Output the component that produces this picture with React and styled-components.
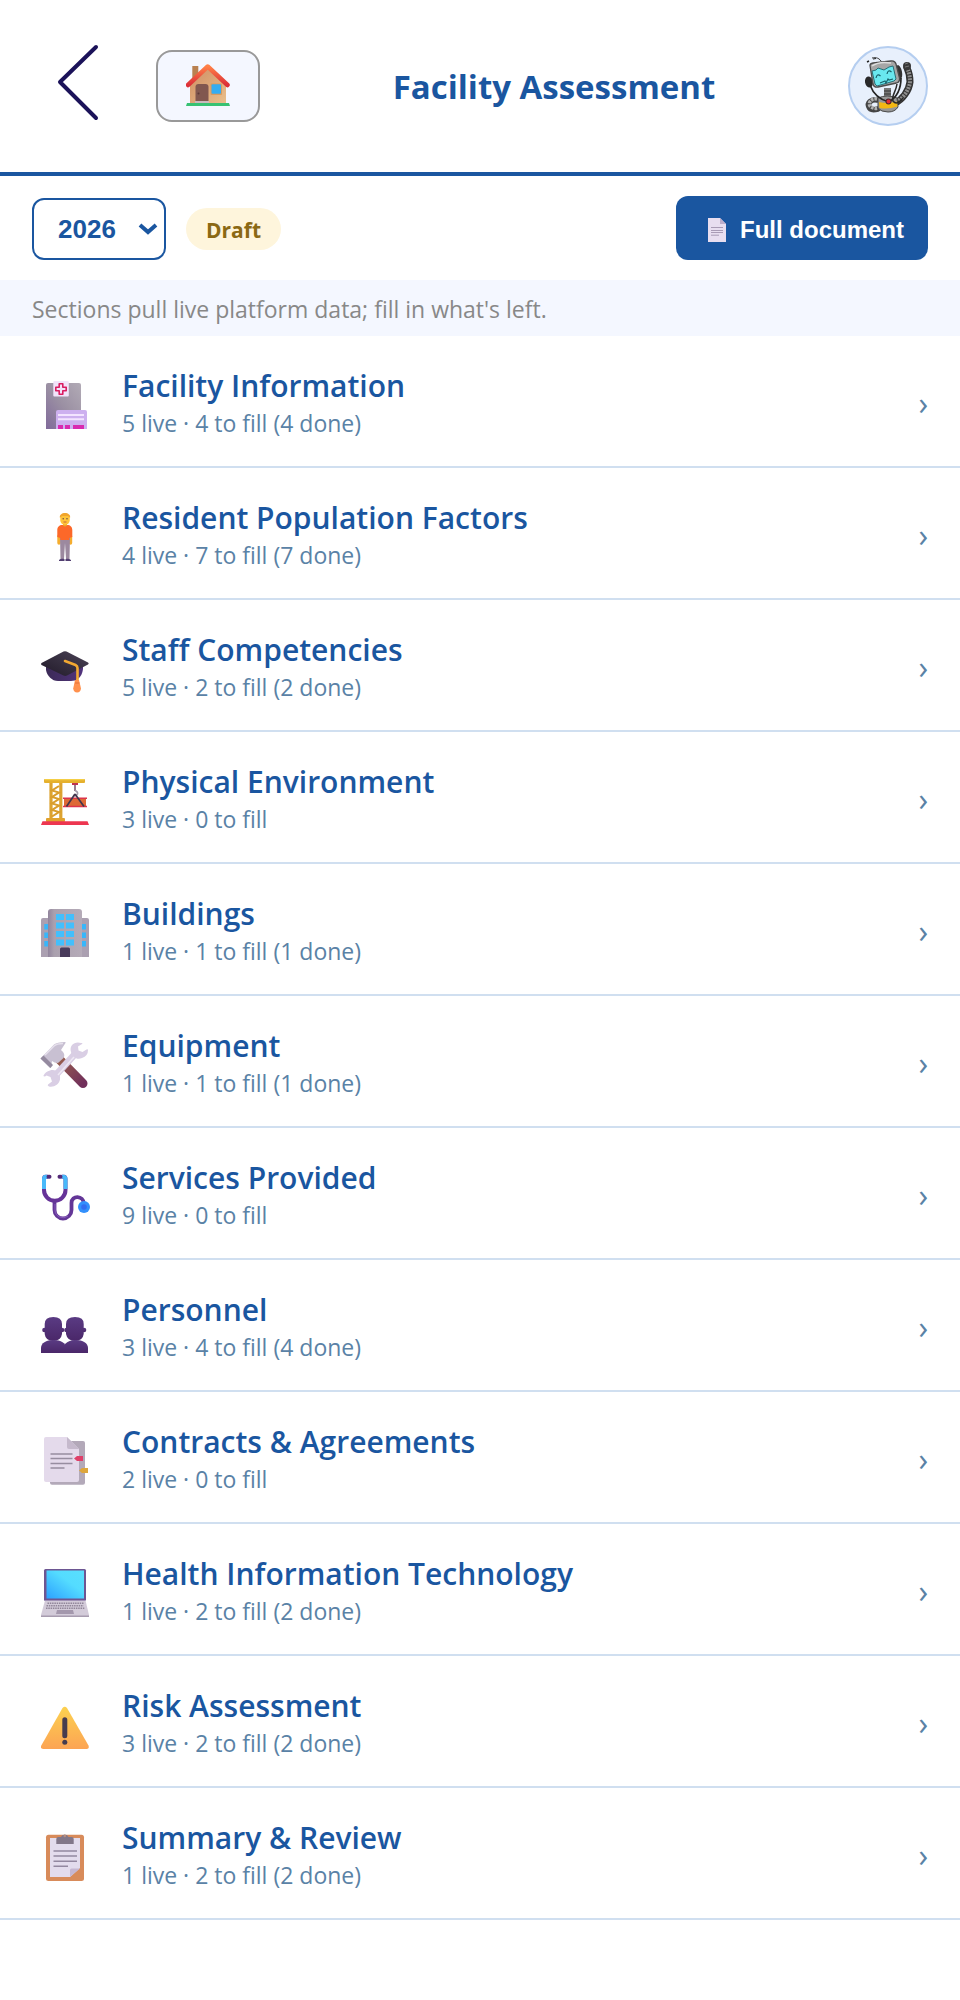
import React, { useState } from "react";
import styled, { createGlobalStyle } from "styled-components";

const sections = [
  { id: "facility", title: "Facility Information", live: 5, fill: 4, done: 4, Icon: HospitalIcon },
  { id: "residents", title: "Resident Population Factors", live: 4, fill: 7, done: 7, Icon: PersonIcon },
  { id: "staff", title: "Staff Competencies", live: 5, fill: 2, done: 2, Icon: CapIcon },
  { id: "physical", title: "Physical Environment", live: 3, fill: 0, done: 0, Icon: CraneIcon },
  { id: "buildings", title: "Buildings", live: 1, fill: 1, done: 1, Icon: BuildingIcon },
  { id: "equipment", title: "Equipment", live: 1, fill: 1, done: 1, Icon: ToolsIcon },
  { id: "services", title: "Services Provided", live: 9, fill: 0, done: 0, Icon: StethoscopeIcon },
  { id: "personnel", title: "Personnel", live: 3, fill: 4, done: 4, Icon: PeopleIcon },
  { id: "contracts", title: "Contracts & Agreements", live: 2, fill: 0, done: 0, Icon: ContractIcon },
  { id: "hit", title: "Health Information Technology", live: 1, fill: 2, done: 2, Icon: LaptopIcon },
  { id: "risk", title: "Risk Assessment", live: 3, fill: 2, done: 2, Icon: WarningIcon },
  { id: "summary", title: "Summary & Review", live: 1, fill: 2, done: 2, Icon: ClipboardIcon },
];

const describe = ({ live, fill, done }) =>
  `${live} live · ${fill} to fill${fill > 0 ? ` (${done} done)` : ""}`;

export default function App() {
  const [year, setYear] = useState("2026");

  return (
    <>
      <GlobalStyle />
      <Header>
        <BackButton type="button" aria-label="Back">
          <BackIcon />
        </BackButton>
        <HomeButton type="button" aria-label="Home">
          <HouseIcon />
        </HomeButton>
        <PageTitle>Facility Assessment</PageTitle>
        <AssistantButton type="button" aria-label="Assistant">
          <RobotIcon />
        </AssistantButton>
      </Header>

      <main>
        <Toolbar>
          <YearField>
            <YearSelect aria-label="Assessment year" value={year} onChange={(e) => setYear(e.target.value)}>
              <option value="2026">2026</option>
              <option value="2025">2025</option>
            </YearSelect>
            <svg width="20" height="14" viewBox="0 0 20 14" fill="none" aria-hidden="true">
              <path d="m2 3 8 7 8-7" stroke="#1a56a0" strokeWidth="4" />
            </svg>
          </YearField>
          <Status>Draft</Status>
          <DocumentButton type="button">
            <PageIcon />
            Full document
          </DocumentButton>
        </Toolbar>
        <Hint>Sections pull live platform data; fill in what's left.</Hint>

        <SectionList>
          {sections.map((section) => (
            <li key={section.id}>
              <SectionRow type="button">
                <IconSlot>
                  <section.Icon />
                </IconSlot>
                <SectionText>
                  <SectionTitle>{section.title}</SectionTitle>
                  <SectionMeta>{describe(section)}</SectionMeta>
                </SectionText>
                <Chevron aria-hidden="true">›</Chevron>
              </SectionRow>
            </li>
          ))}
        </SectionList>
      </main>
    </>
  );
}

// --- Icons ---
function Emoji({ children }) {
  return (
    <svg width="48" height="48" viewBox="0 0 48 48" fill="none" overflow="visible" aria-hidden="true">
      {children}
    </svg>
  );
}

function BackIcon() {
  return (
    <svg width="92" height="84" viewBox="0 0 92 84" fill="none" aria-hidden="true">
      <path d="M64 3 28 38l36 36" stroke="#1b1259" strokeWidth="4" strokeLinecap="round" strokeLinejoin="round" />
    </svg>
  );
}

function HouseIcon() {
  return (
    <svg width="44" height="42" viewBox="0 0 44 42" aria-hidden="true">
      <defs>
        <linearGradient id="houseWall" x1="0" y1="0" x2="1" y2="1">
          <stop offset="0" stopColor="#cf8d63" />
          <stop offset="1" stopColor="#eac08c" />
        </linearGradient>
        <linearGradient id="houseRoof" x1="0" y1="0" x2="0" y2="1">
          <stop offset="0" stopColor="#ff8047" />
          <stop offset="1" stopColor="#dc2f38" />
        </linearGradient>
      </defs>
      <path d="M6.3 2h6v9l-6 6z" fill="#b98150" />
      <path d="M4 20 21.7 4 40 20v20H4z" fill="url(#houseWall)" />
      <path d="m2 21 19.700-18.500L41.500 21" fill="none" stroke="url(#houseRoof)" strokeWidth="4.500" strokeLinecap="round" strokeLinejoin="round" />
      <path d="M9.500 38V23a3 3 0 0 1 3-3H19.500a3 3 0 0 1 3 3v15z" fill="#81574f" />
      <circle cx="12.500" cy="29.500" r="1" fill="#5c3838" />
      <rect x="9" y="37" width="14" height="2.500" fill="#c9b9bd" />
      <rect x="24.500" y="19.500" width="11.500" height="11.500" rx="1" fill="#d99a5e" />
      <rect x="25.500" y="20.300" width="9.500" height="9.500" rx="1" fill="#35adf2" />
      <path d="M1 39h42l1 3H0z" fill="#37c273" />
    </svg>
  );
}

function RobotIcon() {
  return (
    <svg width="76" height="76" viewBox="2 2 76 76" fill="none" aria-hidden="true">
      <path d="M24 12c4-1 8 0 10 5" stroke="#3c3c3c" strokeWidth="1" />
      <path d="M19 16l2-1" stroke="#222" strokeWidth="1.400" />
      <path d="M25 13l3-.5" stroke="#222" strokeWidth="1" />
      <path d="M47 57c7-3 14-12 15-21 0-6-1-10-3-14" stroke="#333" strokeWidth="7" strokeLinecap="round" />
      <path d="M48 56c7-3 13-12 14-20 0-6-1-9-2-12" stroke="#8d8d8d" strokeWidth="4" strokeDasharray="2 1" />
      <circle cx="59" cy="20" r="4" fill="#393939" />
      <path d="M57 18l3-1M57 21l4-1" stroke="#777" strokeWidth="1" />
      <path d="M29 54c-6-1-10 3-8 7 1 3 5 3 9 2" stroke="#444" strokeWidth="5.500" strokeLinecap="round" />
      <path d="M29 53c-6-1-9 4-7 7 2 2 5 3 8 2" stroke="#b1b1b1" strokeWidth="3.500" strokeDasharray="2.500 1" />
      <rect x="36" y="42" width="7" height="10" fill="#777" />
      <path d="M36 45h7M36 48h7" stroke="#333" strokeWidth="1" />
      <path d="M30 52q9-4 19 0l1 9q-3 5-10 5t-10-4z" fill="#979797" stroke="#4a4a4a" strokeWidth="1" />
      <path d="M31 56q9 2 18-.5l.5 5q-9 3-18 1.500z" fill="#f3b713" />
      <ellipse cx="21" cy="36" rx="4" ry="5.500" fill="#292929" transform="rotate(-12 21 36)" />
      <ellipse cx="51" cy="26" rx="3" ry="7" fill="#343434" transform="rotate(-12 51 26)" />
      <path d="M22 19.500q0-2 3-2.500L43 15q4-.5 5 3l3.500 14q.5 4-3 5L30 41q-4 1-5-3z" fill="#a6a6a6" stroke="#4c4c4c" strokeWidth="1.300" />
      <path d="M24 20q7-5 19-3" stroke="#dedede" strokeWidth="1.500" />
      <path d="m24 25 4-1 2-2 6 2 5-3 4-1 3 13-2 2-17 5-2-2z" fill="#69e8ef" stroke="#286e77" strokeWidth="1" />
      <path d="M28 32q1-5 4.500-2M39 28q1-5 4.500-2M32 37l5-2 1 2 2-4 1 1 4-1" stroke="#17626c" strokeWidth="1.200" />
      <path d="M22 39c4 11 11 15 19 17 8-5 12-14 12-24" stroke="#252525" strokeWidth="1.700" />
      <path d="M49 38c-1 8-6 12-4 17 3 4 7 1 10-3" stroke="#292929" strokeWidth="1.500" />
      <circle cx="40.500" cy="55.500" r="3" fill="#4d2427" />
      <circle cx="40.500" cy="55.500" r="1.900" fill="#e42b34" />
    </svg>
  );
}

function PageIcon() {
  return (
    <svg width="32" height="24" viewBox="0 0 32 24" fill="none" aria-hidden="true">
      <path d="M8 0h12l6 6v18H8z" fill="#e8def0" />
      <path d="M20 0v6h6z" fill="#bdaecb" />
      <path d="M11 9.500h12M11 12.500h12M11 14.500h12M11 17.200h8" stroke="#a99bb5" strokeWidth="1" />
    </svg>
  );
}

function HospitalIcon() {
  return (
    <Emoji>
      <defs>
        <linearGradient id="hospital" x1="0" y1="1" x2="1" y2="0">
          <stop offset="0" stopColor="#806a9a" />
          <stop offset=".5" stopColor="#9b90a3" />
          <stop offset="1" stopColor="#b2abb6" />
        </linearGradient>
      </defs>
      <path d="M5 4a2 2 0 0 1 2-2h31a2 2 0 0 1 2 2v44H5z" fill="url(#hospital)" />
      <rect x="12.300" y="0" width="15.500" height="15.500" rx="1" fill="#f2e3fa" />
      <path d="M18.200 2.800h3.600v3.400h3.400v3.600h-3.400v3.400h-3.600V9.800h-3.400V6.200h3.400z" stroke="#d91d62" strokeWidth="1.600" strokeLinejoin="round" />
      <path d="M15 31a2 2 0 0 1 2-2h27a2 2 0 0 1 2 2v17H15z" fill="#cdb0ef" />
      <path d="M17 34h26M17 38.200h26" stroke="#f3e4ff" strokeWidth="2" />
      <path d="M17 44h5v4h-5zM24 44h5v4h-5zM32 44h11v4H32z" fill="#d82bb0" />
    </Emoji>
  );
}

function PersonIcon() {
  return (
    <Emoji>
      <path d="M18 23v7M29.500 23v7" stroke="#f5ad2e" strokeWidth="3.400" strokeLinecap="round" />
      <path d="M19 24h10l-.5 22h-3.500l-1-16-1 16h-3.500z" fill="#9c899f" />
      <path d="M18 47q2-2 5.500-1v2H18zM24.500 46q3-1 5.500 1v1h-5.500z" fill="#513d70" />
      <path d="M16.300 24v-7c0-3 2-5 5-5h5c3 0 5 2 5 5v7l-3 1v2h-9v-2z" fill="#fc6829" />
      <path d="M22 10h4v2.500q-2 2-4 0z" fill="#eda52b" />
      <rect x="19.300" y="1" width="9.400" height="10.800" rx="4.500" fill="#ffc43a" />
      <path d="M19 5c-1-3 2-5 5-5s6 2 5 5l-2-2h-6z" fill="#f1a52c" />
      <circle cx="22.200" cy="5.800" r=".7" fill="#58404a" />
      <circle cx="26" cy="5.800" r=".7" fill="#58404a" />
      <path d="M22.500 9h3" stroke="#b74d37" strokeWidth=".8" />
    </Emoji>
  );
}

function CapIcon() {
  return (
    <Emoji>
      <defs>
        <linearGradient id="cap" x1="0" y1="0" x2="1" y2="0">
          <stop offset="0" stopColor="#3b2a56" />
          <stop offset="1" stopColor="#51337d" />
        </linearGradient>
        <linearGradient id="capTop" x1="0" y1="1" x2="1" y2="0">
          <stop offset="0" stopColor="#211a29" />
          <stop offset="1" stopColor="#4b4356" />
        </linearGradient>
      </defs>
      <path d="M5 20h37v4c-1 9-7 12-12 12H17C11 36 6 31 5 25z" fill="url(#cap)" />
      <path d="m.5 18 22-11.500q1.500-.7 3 0L47 17.500q1.500 1 0 2L26 30.500q-1.700.8-3.500 0L.5 20q-1-1 0-2z" fill="url(#capTop)" />
      <path d="m24 16 10.500 4q2 1 2 3v14" stroke="#f2a832" strokeWidth="2.600" strokeLinecap="round" />
      <path d="M34 35h4l2 8.500q-.5 4-3.900 4t-3.900-4z" fill="#ff914e" />
      <path d="M34 38h4.500" stroke="#e56f35" strokeWidth="1" />
    </Emoji>
  );
}

function CraneIcon() {
  return (
    <Emoji>
      <path d="M10 6v36M19.800 6v36" stroke="#dca330" strokeWidth="3.200" />
      <path d="m18 9-7 4.500 7 2-7 4.500 7 2-7 4.500 7 2-7 4.500 7 2-7 4.500" stroke="#d99d2b" strokeWidth="2" />
      <rect x="3" y="2" width="41" height="4" rx="1" fill="#e5b02e" />
      <path d="M4 2.700h39" stroke="#f8d64c" strokeWidth="1" />
      <rect x="5" y="41" width="19" height="4" rx="1" fill="#e0a22d" />
      <path d="M1.500 44.300h45l1.500 3.700H0z" fill="#ed3650" />
      <path d="M31 6h6v2h-6z" fill="#bf3150" />
      <path d="M34 8v6" stroke="#75516b" strokeWidth="1.500" />
      <path d="M34 13.500q3 1 2.500 3.500-1 2.500-4.500 1.500" stroke="#a29ba9" strokeWidth="1.700" />
      <rect x="23" y="21" width="22" height="8.500" fill="#dd6935" />
      <path d="M22 21.300h24M22 29.500h24" stroke="#dd344b" strokeWidth="1.600" />
      <path d="m34 17-8.500 12.500M34 17l9 12.500" stroke="#41364e" strokeWidth="1.700" />
    </Emoji>
  );
}

function BuildingIcon() {
  return (
    <Emoji>
      <defs>
        <linearGradient id="tower" x1="0" y1="0" x2="1" y2="0">
          <stop offset="0" stopColor="#91849c" />
          <stop offset=".18" stopColor="#aaa0ae" />
          <stop offset="1" stopColor="#b5abb8" />
        </linearGradient>
      </defs>
      <path d="M0 48V11q0-2 2-2h44q2 0 2 2v37z" fill="#aba0b1" />
      <path d="M3.300 15H8v5.500H3.300zM3.300 23.500H8V29H3.300zM3.300 32H8v5.500H3.300zM40 15h5v5.500h-5zM40 23.500h5V29h-5zM40 32h5v5.500h-5z" fill="#38b6fa" />
      <path d="M7 48V3q0-3 3-3h28q3 0 3 3v45z" fill="url(#tower)" />
      <path
        d="M15 5h8v6h-8zM25 5h8v6h-8zM15 13.500h8v6h-8zM25 13.500h8v6h-8zM15 22h8v6h-8zM25 22h8v6h-8zM15 30.500h8v6h-8zM25 30.500h8v6h-8z"
        fill="#43bffc"
      />
      <path d="M19 48v-8q0-1.500 1.500-1.500h7q1.500 0 1.500 1.500v8z" fill="#493b5b" />
    </Emoji>
  );
}

function ToolsIcon() {
  return (
    <Emoji>
      <defs>
        <linearGradient id="handle" x1="0" y1="0" x2="1" y2="1">
          <stop offset="0" stopColor="#98604f" />
          <stop offset="1" stopColor="#712f5a" />
        </linearGradient>
      </defs>
      <path d="m18 18 24 24.500" stroke="url(#handle)" strokeWidth="9" strokeLinecap="round" />
      <path d="M-.5 17.500 13 3.500Q16 1 24 1q1 0 .5 1L20 9q5 4 2.500 8L17 22q-4 0-6-2l-1 6-1 1z" fill="#c8c0d2" />
      <path d="m-.5 17.500 3-3 9.500 9.500-2.500 3z" fill="#948a9f" />
      <path d="m4 14 9-9q3-2.500 9-2.500" stroke="#e6e0ec" strokeWidth="1.500" />
      <path d="m13 36 22-24" stroke="#d9cee4" strokeWidth="7" />
      <path
        d="M9 29.500c6-2 11 3 10 9-1 5-6 8-11 7q-2-1-1-2l4-3-1.500-4.500-4-1.500-1.500 1q-2 0-1.500-1 2-4 6.500-5zM40 2c-6-2-12 2-10 9 1 6 7 8 11 6q6-2 6-8 0-1-1.500-.5l-4 2.500-4-1.500-.5-4 4-2.500q1-.5 0-1z"
        fill="#d9cee4"
      />
      <path d="m17 34 16-18" stroke="#eee8f4" strokeWidth="1.500" />
    </Emoji>
  );
}

function StethoscopeIcon() {
  return (
    <Emoji>
      <path d="M7 3.700H4.500Q3 3.700 3 6v11a10.500 10.500 0 0 0 21.500 0V6q0-2.300-1.500-2.300h-2.500" stroke="#663398" strokeWidth="4" />
      <path d="M6.500 3.700H5Q3 3.700 3 6v10M24.500 16V6q0-2.300-2-2.300H21" stroke="#48b9fa" strokeWidth="4" />
      <path d="M7.500 3.700h1M18.500 3.700h1" stroke="#532a77" strokeWidth="4" strokeLinecap="round" />
      <path d="M13.500 28v9a8.500 8.500 0 0 0 17 0v-7c0-8 12-8 12.500 1" stroke="#633697" strokeWidth="3.800" />
      <path d="M14 31v6a8 8 0 0 0 13 6" stroke="#875bbc" strokeWidth="1" />
      <circle cx="43" cy="34" r="6" fill="#3290fc" />
      <circle cx="43" cy="34" r="2.800" fill="#326df0" />
    </Emoji>
  );
}

function PeopleIcon() {
  return (
    <Emoji>
      <defs>
        <linearGradient id="bust" x1="0" y1="0" x2="0" y2="1">
          <stop offset="0" stopColor="#5a3b83" />
          <stop offset="1" stopColor="#4a2769" />
        </linearGradient>
      </defs>
      <g fill="url(#bust)">
        <circle cx="3.500" cy="25" r="2.300" />
        <circle cx="21" cy="25" r="2.300" />
        <path d="M3.700 19q0-7 8.600-7t8.700 7v10q-1 7-8.700 7t-8.600-7z" />
        <path d="M0 48v-5c0-5 5-8 12.500-8S25 38 25 43v5z" />
        <circle cx="25.500" cy="25" r="2.300" />
        <circle cx="43" cy="25" r="2.300" />
        <path d="M25 19q0-7 9-7t8.700 7v10q-1 7-8.700 7t-9-7z" />
        <path d="M24 48v-9q4-4 10.500-4C42 35 47 38 47 43v5z" />
      </g>
    </Emoji>
  );
}

function ContractIcon() {
  return (
    <Emoji>
      <rect x="9" y="4" width="35" height="43.700" rx="2" fill="#b3a9b9" />
      <path d="M3 2q0-2 2-2h21l12 12v31q0 2-2 2H5q-2 0-2-2z" fill="#e4daeb" />
      <path d="M26 0v10q0 2 2 2h10z" fill="#c5b9cc" />
      <path d="M9.500 17h22M9.500 21.500h22M9.500 26.500h22M9.500 31h14" stroke="#978da0" strokeWidth="1.500" />
      <path d="m33 21.500 3-2.500h6v5h-6z" fill="#df3f69" />
      <path d="m38 33.500 3-2.500h6v5h-6z" fill="#dda63c" />
    </Emoji>
  );
}

function LaptopIcon() {
  return (
    <Emoji>
      <defs>
        <linearGradient id="screen" x1="0" y1="1" x2="1" y2="0">
          <stop offset="0" stopColor="#2ca1ff" />
          <stop offset=".6" stopColor="#54dcff" />
          <stop offset="1" stopColor="#59dffd" />
        </linearGradient>
      </defs>
      <rect x="3" y="0" width="42" height="32" rx="1.500" fill="#6d5692" />
      <rect x="5.500" y="1.500" width="37.500" height="28" fill="url(#screen)" />
      <path d="M4 31.500h40.500L48 46v2H0v-2z" fill="#d3cbd9" />
      <path d="M0 46.500h48V48H0z" fill="#a79caf" />
      <path d="M6.500 34.200h36M5.500 36.700h37M5 39.200h38.500" stroke="#918699" strokeWidth="1.500" strokeDasharray="1.500 .8" />
      <path d="M16 41h16l1 4H15z" fill="#a498ad" />
    </Emoji>
  );
}

function WarningIcon() {
  return (
    <Emoji>
      <defs>
        <linearGradient id="warn" x1="0" y1="0" x2="0" y2="1">
          <stop offset="0" stopColor="#fcd14f" />
          <stop offset="1" stopColor="#fca454" />
        </linearGradient>
      </defs>
      <path d="M21.500 7q2.300-2.500 4.500 0l21.500 37.500q1 3-1.500 3.500H2q-3-.5-1.700-3.500z" fill="url(#warn)" />
      <path d="M23.800 18.800v16" stroke="#473c4e" strokeWidth="5" strokeLinecap="round" />
      <circle cx="23.800" cy="41.300" r="2.500" fill="#473c4e" />
    </Emoji>
  );
}

function ClipboardIcon() {
  return (
    <Emoji>
      <rect x="5" y="1.700" width="38" height="46.300" rx="2.500" fill="#d88b5a" />
      <path d="M9 5h30v30l-10 9H9z" fill="#e3dced" />
      <path d="M29 44v-7q0-1.500 1.500-1.500H39z" fill="#c5b7d2" />
      <path d="M15.300 11V6q0-2 2-2H20a4 4 0 0 1 7.500 0h3.200q2 0 2 2v5z" fill="#827789" />
      <circle cx="23.800" cy="3" r="1.300" fill="#b98e7e" />
      <path d="M12.500 18H36M12.500 23H36M12.500 28.300H36M12.500 33.300H27" stroke="#9388a0" strokeWidth="1.500" />
    </Emoji>
  );
}

// --- Styled Components ---
const GlobalStyle = createGlobalStyle`
  * {
    box-sizing: border-box;
  }

  body {
    margin: 0;
    background: #fff;
    color: #1a56a0;
    font-family: "Segoe UI", "Open Sans", "Noto Sans", sans-serif;
  }

  button {
    font-family: inherit;
    cursor: pointer;
  }
`;

const Header = styled.header`
  display: flex;
  align-items: center;
  padding: 44px 32px;
  border-bottom: 4px solid #1a56a0;
`;

const BackButton = styled.button`
  display: flex;
  margin-right: 32px;
  padding: 0;
  border: none;
  background: none;
`;

const HomeButton = styled.button`
  display: flex;
  align-items: center;
  justify-content: center;
  width: 104px;
  height: 72px;
  padding: 0 0 2px;
  border: 2px solid #999;
  border-radius: 16px;
  background: #f4f7ff;
`;

const PageTitle = styled.h1`
  flex: 1;
  margin: 0;
  padding-top: 2px;
  font-size: 33px;
  font-weight: 700;
  line-height: 48px;
  text-align: center;
`;

const AssistantButton = styled.button`
  display: flex;
  width: 80px;
  height: 80px;
  padding: 0;
  border: 2px solid #b5cef0;
  border-radius: 50%;
  background: #e8f0fc;
  overflow: hidden;
`;

const Toolbar = styled.div`
  display: flex;
  align-items: center;
  gap: 20px;
  padding: 20px 32px;
`;

const YearField = styled.div`
  position: relative;
  display: flex;
  align-self: flex-end;

  svg {
    position: absolute;
    top: 24px;
    right: 8px;
    pointer-events: none;
  }
`;

const YearSelect = styled.select`
  appearance: none;
  width: 134px;
  height: 62px;
  padding: 0 32px 0 24px;
  border: 2px solid #1a56a0;
  border-radius: 12px;
  background: #fff;
  color: #1a56a0;
  font-family: "Liberation Sans", Arial, sans-serif;
  font-size: 26px;
  font-weight: 700;
`;

const Status = styled.span`
  margin-top: 2px;
  padding: 7px 20px 5px;
  border-radius: 21px;
  background: #fef5dc;
  color: #8b6914;
  font-size: 21px;
  font-weight: 700;
  line-height: 30px;
`;

const DocumentButton = styled.button`
  display: flex;
  align-items: center;
  gap: 8px;
  height: 64px;
  margin-left: auto;
  padding: 3px 24px 0;
  border: none;
  border-radius: 12px;
  background: #1a56a0;
  color: #fff;
  font-family: "Liberation Sans", Arial, sans-serif;
  font-size: 24px;
  font-weight: 700;
`;

const Hint = styled.p`
  margin: 0;
  padding: 13px 32px 11px;
  background: #f4f7ff;
  color: #888;
  font-size: 23px;
  line-height: 32px;
`;

const SectionList = styled.ul`
  margin: 0;
  padding: 0;
  list-style: none;
`;

const SectionRow = styled.button`
  display: flex;
  align-items: center;
  gap: 24px;
  width: 100%;
  min-height: 132px;
  padding: 26px 32px;
  border: none;
  border-bottom: 2px solid #d0dff0;
  background: #fff;
  color: #5a82a6;
  text-align: left;
`;

const IconSlot = styled.span`
  display: flex;
  justify-content: center;
  width: 66px;
  padding-top: 8px;
`;

const SectionText = styled.span`
  display: flex;
  flex: 1;
  flex-direction: column;
  padding-top: 2px;
`;

const SectionTitle = styled.span`
  color: #1a56a0;
  font-size: 30px;
  font-weight: 600;
  line-height: 42px;
`;

const SectionMeta = styled.span`
  font-size: 23px;
  line-height: 32px;
`;

const Chevron = styled.span`
  padding-top: 4px;
  font-size: 32px;
  line-height: 42px;
`;
